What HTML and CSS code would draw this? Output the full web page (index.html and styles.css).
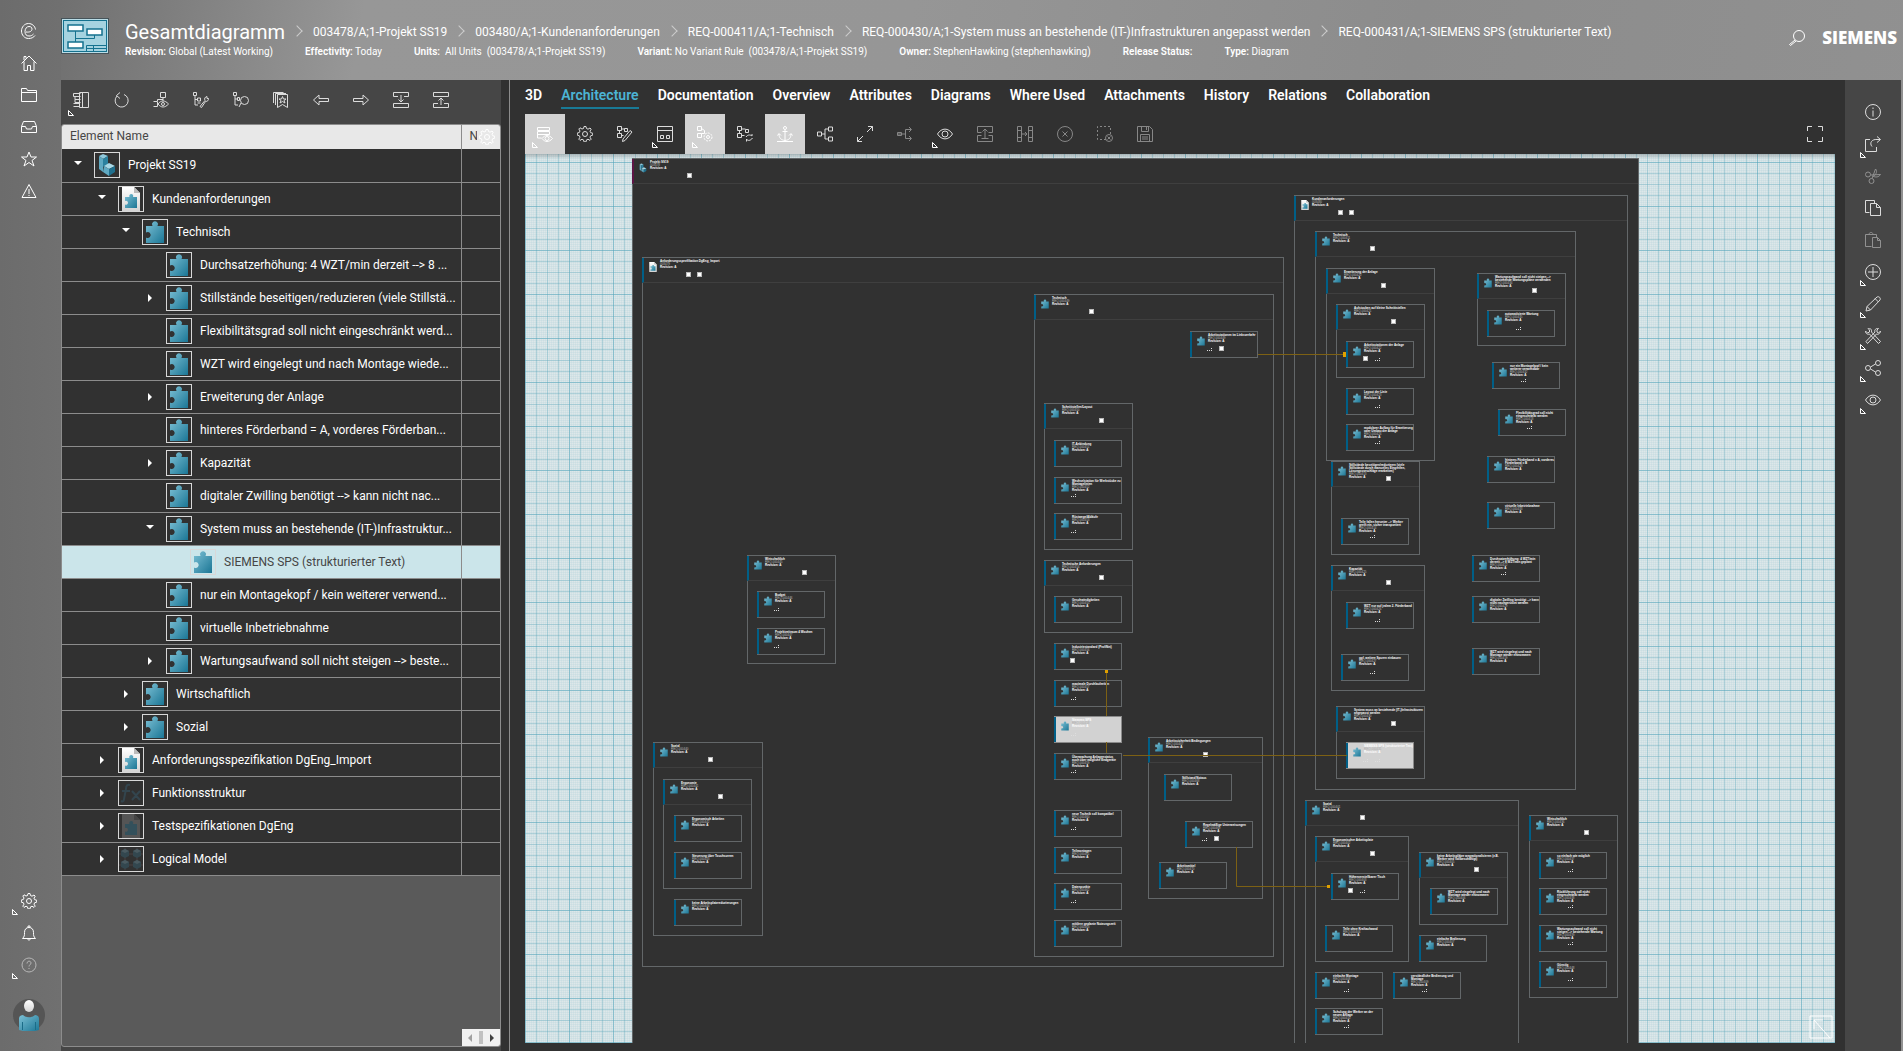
FILE: index.html
```html
<!DOCTYPE html>
<html lang="en">
<head>
  <meta charset="UTF-8">
  <title>Gesamtdiagramm</title>
  <link rel="stylesheet" href="styles.css">
</head>
<body>

  <svg class="sprite" aria-hidden="true">
    <defs>
      <linearGradient id="teal" x1="0" y1="0" x2="1" y2="1">
        <stop offset="0" stop-color="#7cc0d5"/>
        <stop offset="1" stop-color="#1b7695"/>
      </linearGradient>
      <linearGradient id="paper" x1="0" y1="0" x2="0" y2="1">
        <stop offset="0" stop-color="#ffffff"/>
        <stop offset="1" stop-color="#d4d4d4"/>
      </linearGradient>
    </defs>

    <!-- object icons -->
    <symbol id="o-puzzle" viewBox="0 0 24 24"><path fill="url(#teal)" d="M3 6h6.500a3 3 0 1 1 5 0H21v17H3v-5.500a3 3 0 1 0 0-5z"/></symbol>
    <symbol id="o-doc" viewBox="0 0 24 24"><path fill="url(#paper)" d="M3 0h12l6 6v18H3z"/><path fill="#bbb" d="M15 0v6h6z"/><path fill="url(#teal)" d="M6 10h4.500a2 2 0 1 1 3.500 0H18v11H6v-3.500a2 2 0 1 0 0-3.500z"/></symbol>
    <symbol id="o-part" viewBox="0 0 24 24"><path fill="#8fc9dc" d="M4 3l4-2 5 2-5 3z"/><path fill="#5fa9c2" d="M4 3l4 3v13l-4-3z"/><path fill="#2b819f" d="M8 6l5-3v8l-5 3z"/><path fill="#a8d8e6" d="M9 13l5-3 6 3-6 3z"/><path fill="#5fa9c2" d="M9 13l5 3v7l-6-4z"/><path fill="#1f6f8d" d="M14 16l6-3v6l-6 4z"/></symbol>
    <symbol id="o-fx" viewBox="0 0 24 24"><g fill="none" stroke="#33454e" stroke-width="2"><path d="M11 4c-3-1-4 1-4 4L5 18c0 2-1 3-3 2M3 10h8M13 10l8 9M21 10l-8 9"/></g></symbol>
    <symbol id="o-docdim" viewBox="0 0 24 24"><path fill="#555" d="M3 0h12l6 6v18H3z"/><path fill="#444" d="M15 0v6h6z"/><path fill="#33505b" d="M6 10h4.500a2 2 0 1 1 3.500 0H18v11H6v-3.500a2 2 0 1 0 0-3.500z"/></symbol>
    <symbol id="o-logical" viewBox="0 0 24 24"><path stroke="#4a4244" fill="none" d="M0 7h24M0 18h24M6 1v22M18 1v22"/><g fill="#33474f"><path d="M6 2l4 2v5l-4 2-4-2V4zM18 2l4 2v5l-4 2-4-2V4zM6 13l4 2v5l-4 2-4-2v-5zM18 13l4 2v5l-4 2-4-2v-5z"/></g><g fill="#4a5a60"><path d="M6 2l4 2-4 2-4-2zM18 2l4 2-4 2-4-2zM6 13l4 2-4 2-4-2zM18 13l4 2-4 2-4-2z"/></g></symbol>

    <!-- command icons -->
    <symbol id="i-tri" viewBox="0 0 6 6"><path d="M.5.5v5h5z"/></symbol>
    <symbol id="i-back" viewBox="0 0 16 16"><path d="M5 9c4 .5 6-1 6-3 0-1.500-1-2.500-3-2.500C5.500 3.500 4 6 4 8.500c0 3 1.500 4.500 4 4.500 2 0 3-.5 4.500-2M14.500 6.500C14 3 11 .5 7.500.5 3.500.5.5 4 .5 8s3 7.500 7 7.500c3 0 5-1 6.500-3"/></symbol>
    <symbol id="i-home" viewBox="0 0 16 16"><path d="M.5 8.500L8 1l7.500 7.500M3 6.500v9h3.500v-5h3v5H13v-9M3 5V1.500h2v2"/></symbol>
    <symbol id="i-folder" viewBox="0 0 16 16"><path d="M.5 14.500v-13h5l1 2h9v11zM.5 5.500h15"/></symbol>
    <symbol id="i-inbox" viewBox="0 0 16 16"><path d="M.5 7.500l2-5h11l2 5v6H.5zM.5 7.500h4l1 2.500h5l1-2.500h4"/></symbol>
    <symbol id="i-star" viewBox="0 0 16 16"><path d="M8 1l2 5h5.500L11 9.500l2 5.500-5-3.500L3 15l2-5.500L.5 6H6z"/></symbol>
    <symbol id="i-warn" viewBox="0 0 16 16"><path d="M8 1.500l7 13H1zM8 6v5M8 12v1"/></symbol>
    <symbol id="i-gear" viewBox="0 0 16 16"><path d="M6.500 2.500L7 .5h2l.5 2 1.500.7 2-1.200 1.200 1.200-1.200 2 .7 1.500 2 .5v2l-2 .5-.7 1.500 1.200 2-1.200 1.200-2-1.200-1.500.7-.5 2H7l-.5-2-1.500-.7-2 1.200-1.200-1.200 1.200-2-.7-1.500-2-.5V7l2-.5.700-1.500-1.200-2L3 1.800 5 3z"/><circle cx="8" cy="8" r="2.500"/></symbol>
    <symbol id="i-bell" viewBox="0 0 16 16"><path d="M1.500 13.500c2-2 2-3 2-6C3.500 4 5.500 2.500 8 2.500s4.500 1.500 4.500 5c0 3 0 4 2 6zM7 2.500V1h2v1.500M6.500 13.500c0 2 3 2 3 0"/></symbol>
    <symbol id="i-help" viewBox="0 0 16 16"><circle cx="8" cy="8" r="7"/><path d="M6 6.500c0-3 4-3 4-.5C10 7.500 8 8 8 9.500M8 11v1"/></symbol>
    <symbol id="i-panel" viewBox="0 0 16 16"><path d="M6.500.5h9v15h-9zM.5 1.500h7M.5 1.500v3h7M2 4.500v3h5.500M2 7.500v3h5.500M.5 11.500h6M.5 14.500h6M9.500 1v14"/></symbol>
    <symbol id="i-refresh" viewBox="0 0 16 16"><path d="M4 4a6.500 6.500 0 1 0 7-1.500M7 .5L3.500 3.500 7 6.500"/></symbol>
    <symbol id="i-boxeye" viewBox="0 0 16 16"><path d="M7.500.5h5v5h-5zM10 6v3M.5 9.500h4v5h-4M4.500 9V7.500H10M5 12c3-4 7-4 10.500 0-3.500 4-7.500 4-10.500 0z"/><circle cx="10" cy="12" r="1.500"/></symbol>
    <symbol id="i-treewrench" viewBox="0 0 16 16"><path d="M.5.5h3v3h-3zM2 4v9h3M2 7.500h3M4.500 6h3v3h-3zM4.500 11h3M7 14.500l5-6c-1-2 0-3.500 2-4v2h1.500c0 2-1 3-3 3l-4 6z"/></symbol>
    <symbol id="i-treefind" viewBox="0 0 16 16"><path d="M.5.5h3v3h-3zM2 4v9h3M2 7h3M4.500 5.500h2v3h-2zM8 11l-2 4"/><circle cx="11.500" cy="8.500" r="4"/></symbol>
    <symbol id="i-bookmarks" viewBox="0 0 16 16"><path d="M4.500 15.500v-13h10v13l-5-3zM2.500 13V1.500H13M.5 11V.5h10M9.500 4.500l1 2.500H13l-2 1.500 1 2.500-2.500-1.500L7 11l1-2.500L6 7h2.500z"/></symbol>
    <symbol id="i-left" viewBox="0 0 16 16"><path d="M.5 8L6 3v3.500h9.500v3H6V13z"/></symbol>
    <symbol id="i-right" viewBox="0 0 16 16"><path d="M15.500 8L10 3v3.500H.5v3H10V13z"/></symbol>
    <symbol id="i-expand" viewBox="0 0 16 16"><path d="M5 4.500H.5v-4h15v4H11M.5 11.500h15v4H.5zM8 3v7M5.500 7.500L8 10l2.500-2.500"/></symbol>
    <symbol id="i-collapse" viewBox="0 0 16 16"><path d="M5 11.500H.5v4h15v-4H11M.5.5h15v4H.5zM8 13V6M5.500 8.500L8 6l2.500 2.500"/></symbol>
    <symbol id="i-listeye" viewBox="0 0 16 16"><path d="M.5 1.500h12v3H.5zM.5 5.500h12v3H.5zM.5 8v4h4M5 12.500c3-4 7-4 10.500 0-3.500 4-7.500 4-10.500 0z"/><circle cx="10" cy="12.500" r="2"/></symbol>
    <symbol id="i-blockpen" viewBox="0 0 16 16"><path d="M.5.5h4v4h-4zM.5 7.500h4v4h-4zM7.500 2.500h3v3h-3zM4.500 3h3M2.500 4.500v3M4.500 9.500h2M6 13l7-8.500 2 1.500-7 8.500-2.500 1z"/></symbol>
    <symbol id="i-layout" viewBox="0 0 16 16"><path d="M.5.5h15v15H.5zM.5 4.500h15M3.500 9.500h3v3h-3zM9.500 9.500h3v3h-3z"/></symbol>
    <symbol id="i-blockgear" viewBox="0 0 16 16"><path d="M.5.5h4v4h-4zM.5 7.500h4v4h-4zM4.500 2.500l3 2v3H4.500"/><circle cx="11" cy="11" r="1.500"/><circle cx="11" cy="11" r="4" stroke-dasharray="2 1"/></symbol>
    <symbol id="i-blocksync" viewBox="0 0 16 16"><path d="M.5.5h4v4h-4zM.5 7.500h4v4h-4zM8.500 3.500h3v3h-3zM4.500 3h4M2.500 4.500v3M4.500 9.500h3M9 11c2-3 5-2 6-1V8M15.500 12c-2 3-5 3-6 1v2.500"/></symbol>
    <symbol id="i-anchor" viewBox="0 0 16 16"><circle cx="8" cy="2" r="1.500"/><path d="M8 3.500v11M5.500 5.500h5M2 8c0 4 2 6 6 6.500 4-.5 6-2.500 6-6.500M.5 9.500L2 7.500l2 2M12 9.500l2-2 1.500 2M0 15.500h16"/></symbol>
    <symbol id="i-branch" viewBox="0 0 16 16"><path d="M.5 6h4v4h-4zM11.500 1h4v4h-4zM11.500 11h4v4h-4zM4.500 8H8M11.500 3H8v10h3.500"/></symbol>
    <symbol id="i-scale" viewBox="0 0 16 16"><path d="M10 6l5.500-5.500M11 .5h4.500V5M6 10L.5 15.500M.5 11v4.500H5"/></symbol>
    <symbol id="i-route" viewBox="0 0 16 16"><path d="M.5 6.500h4v3h-4zM1 8h8M14 3.500H8.500v9H14M12 1l2.500 2.500L12 6M12 10l2.500 2.500L12 15"/></symbol>
    <symbol id="i-eye" viewBox="0 0 16 16"><path d="M.5 8C4.500 1.500 11.500 1.500 15.500 8 11.500 14.500 4.500 14.500.5 8z"/><circle cx="8" cy="8" r="3"/></symbol>
    <symbol id="i-hgap" viewBox="0 0 16 16"><path d="M4.500 6.500h-4v-6h15v6h-4M4.500 9.500h-4v6h15v-6h-4M4.500 12.500h7M8 12V3M5.500 5.500L8 3l2.500 2.500"/></symbol>
    <symbol id="i-vgap" viewBox="0 0 16 16"><path d="M.5.5h4v15h-4zM11.500.5h4v15h-4zM.5 4.500h4M.5 11.500h4M11.500 4.500h4M11.500 11.500h4M5 8h5M8 6l2 2-2 2"/></symbol>
    <symbol id="i-cancel" viewBox="0 0 16 16"><circle cx="8" cy="8" r="7.500"/><path d="M5.500 5.500l5 5M10.500 5.500l-5 5"/></symbol>
    <symbol id="i-deselect" viewBox="0 0 16 16"><path stroke-dasharray="2 2" d="M9 13.500H.5V.5h13V9"/><circle cx="12" cy="12" r="3.500"/><path d="M10.500 10.500l3 3M13.500 10.500l-3 3"/></symbol>
    <symbol id="i-save" viewBox="0 0 16 16"><path d="M.5.5h12l3 3v12H.5zM4.500.5v5h7v-5M9.500 1v3M3.500 15V8.500h9V15M5 11h6M5 13h6"/></symbol>
    <symbol id="i-full" viewBox="0 0 16 16"><path d="M.5 5V.5H5M11 .5h4.500V5M15.500 11v4.500H11M5 15.500H.5V11"/></symbol>
    <symbol id="i-info" viewBox="0 0 16 16"><circle cx="8" cy="8" r="7.500"/><path d="M8 6.500v6M8 3.500v1.500"/></symbol>
    <symbol id="i-open" viewBox="0 0 16 16"><path d="M5 3.500H.5v12h11V11M7 10.500C4 7 7 3 12 3.500h3M12 .5l3.500 3-3.500 3"/></symbol>
    <symbol id="i-cut" viewBox="0 0 16 16"><circle cx="3" cy="6.500" r="2.500"/><circle cx="6.500" cy="13" r="2.500"/><path d="M5.500 7l10-.5c-2 3-5 3-8 1.500M7 10.500L10.500 1c2 2 1 5-2 7.500"/></symbol>
    <symbol id="i-copy" viewBox="0 0 16 16"><path d="M4.500 12.500h-4V.5h9v3M5.500 3.500h6l4 4v8h-10zM11.500 3.500v4h4"/></symbol>
    <symbol id="i-paste" viewBox="0 0 16 16"><path d="M6.500 14.500h-6v-12h11V5M3.500 2.500c0-1 1-1 2-2h1c1 1 2 1 2 2M7.500 5.500h5l3 3v7h-8zM12.500 5.500v3h3"/></symbol>
    <symbol id="i-add" viewBox="0 0 16 16"><circle cx="8" cy="8" r="7.500"/><path d="M8 3v10M3 8h10"/></symbol>
    <symbol id="i-pen" viewBox="0 0 16 16"><path d="M1 15l1-4.500L12 1c2-1 4 1 3 3L5.500 14zM10 2.500L13.500 6M2 10.500L5.500 14"/></symbol>
    <symbol id="i-tools" viewBox="0 0 16 16"><path d="M.5 3l2 2 2-1V2L3 .5c2-1 4 1 3.500 3.500l9 9.500-2 2L4.500 6C2.500 7 0 5 .5 3zM15.500 3l-2 2-1.500-1V2L13.500.5C11 0 9 2 10 4l-9 9.500 1.500 2 9-9.500c2 1 4-1 4-3z"/></symbol>
    <symbol id="i-share" viewBox="0 0 16 16"><circle cx="3" cy="8" r="2.500"/><circle cx="13" cy="3" r="2.500"/><circle cx="13" cy="13" r="2.500"/><path d="M5.500 7l5-3M5.500 9l5 3"/></symbol>
    <symbol id="i-search" viewBox="0 0 16 16"><circle cx="10" cy="6" r="5.500"/><path d="M6 10l-5.500 4.500 1 1L7 11"/></symbol>
  </svg>

  <nav class="rail">
    <div class="rail-group">
      <button aria-label="Back"><svg class="icon"><use href="#i-back"/></svg></button>
      <button aria-label="Home"><svg class="icon"><use href="#i-home"/></svg></button>
      <button aria-label="Folders"><svg class="icon"><use href="#i-folder"/></svg></button>
      <button aria-label="Inbox"><svg class="icon"><use href="#i-inbox"/></svg></button>
      <button aria-label="Favorites"><svg class="icon"><use href="#i-star"/></svg></button>
      <button aria-label="Alerts"><svg class="icon"><use href="#i-warn"/></svg></button>
    </div>
    <div class="rail-group">
      <button aria-label="Settings"><svg class="icon"><use href="#i-gear"/></svg><svg class="tri"><use href="#i-tri"/></svg></button>
      <button aria-label="Notifications"><svg class="icon"><use href="#i-bell"/></svg></button>
      <button aria-label="Help"><svg class="icon dim"><use href="#i-help"/></svg><svg class="tri"><use href="#i-tri"/></svg></button>
      <button class="avatar" aria-label="Profile">
        <svg viewBox="0 0 32 32">
          <circle cx="16" cy="16" r="16" fill="#555"/>
          <ellipse cx="16" cy="7" rx="5" ry="6" fill="url(#paper)"/>
          <path fill="url(#teal)" d="M6 31V20c0-3 2-4 4-4 3 3 9 3 12 0 2 0 4 1 4 4v11c-6 2-14 2-20 0z"/>
          <path stroke="#1b6c88" d="M9.500 23v8M22.500 23v8"/>
        </svg>
      </button>
    </div>
  </nav>

  <div class="page">
    <header class="header">
      <svg class="doc-icon" viewBox="0 0 48 36">
        <rect x=".5" y=".5" width="47" height="35" fill="#b9dce6" stroke="#46545a"/>
        <rect x="2.500" y="2.500" width="43" height="31" fill="#a5d3e0" stroke="#15728f"/>
        <g fill="#fff" stroke="#15728f" stroke-width="1.500"><path d="M7 7h15v6H7zM26 11h15v6H26zM7 24h15v6H7z"/></g>
        <path fill="none" stroke="#15728f" d="M14.500 13v11M14.500 20.500h19V17M25.500 33V27.500h20M25.500 30.500h20M32.500 27.500V33"/>
      </svg>
      <div class="titles">
        <div class="crumbs">
          <h1>Gesamtdiagramm</h1>
          <a href="#">003478/A;1-Projekt SS19</a>
          <a href="#">003480/A;1-Kundenanforderungen</a>
          <a href="#">REQ-000411/A;1-Technisch</a>
          <a href="#">REQ-000430/A;1-System muss an bestehende (IT-)Infrastrukturen angepasst werden</a>
          <a href="#">REQ-000431/A;1-SIEMENS SPS (strukturierter Text)</a>
        </div>
        <div class="meta">
          <span><b>Revision:</b> Global (Latest Working)</span>
          <span><b>Effectivity:</b> Today</span>
          <span><b>Units:</b>&nbsp; All Units &nbsp;(003478/A;1-Projekt SS19)</span>
          <span><b>Variant:</b> No Variant Rule &nbsp;(003478/A;1-Projekt SS19)</span>
          <span><b>Owner:</b> StephenHawking (stephenhawking)</span>
          <span><b>Release Status:</b></span>
          <span><b>Type:</b> Diagram</span>
        </div>
      </div>
      <button class="search" aria-label="Search"><svg class="icon"><use href="#i-search"/></svg></button>
      <div class="brand">SIEMENS</div>
    </header>

    <div class="work">
      <section class="tree-panel">
        <div class="tree-tools">
          <button aria-label="Panel"><svg class="icon"><use href="#i-panel"/></svg><svg class="tri"><use href="#i-tri"/></svg></button>
          <button aria-label="Reset"><svg class="icon"><use href="#i-refresh"/></svg></button>
          <button aria-label="Show"><svg class="icon"><use href="#i-boxeye"/></svg></button>
          <button aria-label="Configure"><svg class="icon"><use href="#i-treewrench"/></svg></button>
          <button aria-label="Find"><svg class="icon"><use href="#i-treefind"/></svg></button>
          <button aria-label="Bookmarks"><svg class="icon"><use href="#i-bookmarks"/></svg></button>
          <button aria-label="Previous"><svg class="icon"><use href="#i-left"/></svg></button>
          <button aria-label="Next"><svg class="icon"><use href="#i-right"/></svg></button>
          <button aria-label="Expand"><svg class="icon"><use href="#i-expand"/></svg></button>
          <button aria-label="Collapse"><svg class="icon"><use href="#i-collapse"/></svg></button>
        </div>
        <div class="tree-box">
          <table class="tree">
            <thead>
              <tr><th>Element Name</th><th class="narrow">N<svg class="icon"><use href="#i-gear"/></svg></th></tr>
            </thead>
            <tbody id="treeRows"></tbody>
          </table>
          <div class="hscroll"><i class="arrow-left"></i><i class="thumb"></i><i class="arrow-right"></i></div>
        </div>
      </section>

      <main class="main">
        <div class="tabs">
          <a href="#">3D</a>
          <a href="#" class="active">Architecture</a>
          <a href="#">Documentation</a>
          <a href="#">Overview</a>
          <a href="#">Attributes</a>
          <a href="#">Diagrams</a>
          <a href="#">Where Used</a>
          <a href="#">Attachments</a>
          <a href="#">History</a>
          <a href="#">Relations</a>
          <a href="#">Collaboration</a>
        </div>
        <div class="tools">
          <button class="on" aria-label="View"><svg class="icon"><use href="#i-listeye"/></svg><svg class="tri"><use href="#i-tri"/></svg></button>
          <button aria-label="Settings"><svg class="icon"><use href="#i-gear"/></svg></button>
          <button aria-label="Edit"><svg class="icon"><use href="#i-blockpen"/></svg></button>
          <button aria-label="Layout"><svg class="icon"><use href="#i-layout"/></svg><svg class="tri"><use href="#i-tri"/></svg></button>
          <button class="on" aria-label="Options"><svg class="icon"><use href="#i-blockgear"/></svg><svg class="tri"><use href="#i-tri"/></svg></button>
          <button aria-label="Update"><svg class="icon"><use href="#i-blocksync"/></svg></button>
          <button class="on" aria-label="Anchor"><svg class="icon"><use href="#i-anchor"/></svg></button>
          <button aria-label="Branch"><svg class="icon"><use href="#i-branch"/></svg></button>
          <button aria-label="Fit"><svg class="icon"><use href="#i-scale"/></svg></button>
          <button aria-label="Route"><svg class="icon dim"><use href="#i-route"/></svg></button>
          <button aria-label="Visibility"><svg class="icon"><use href="#i-eye"/></svg><svg class="tri"><use href="#i-tri"/></svg></button>
          <button aria-label="Align vertical"><svg class="icon dim"><use href="#i-hgap"/></svg></button>
          <button aria-label="Align horizontal"><svg class="icon dim"><use href="#i-vgap"/></svg></button>
          <button aria-label="Cancel"><svg class="icon dim"><use href="#i-cancel"/></svg></button>
          <button aria-label="Deselect"><svg class="icon dim"><use href="#i-deselect"/></svg></button>
          <button aria-label="Save"><svg class="icon dim"><use href="#i-save"/></svg></button>
          <button class="full" aria-label="Full screen"><svg class="icon"><use href="#i-full"/></svg></button>
        </div>
        <div class="canvas" id="canvas">
          <svg class="overview" viewBox="0 0 26 26"><path d="M3 1h22v22M3 1v22h22M7 5v9M7 5h9M7 5l16 18"/></svg>
        </div>
      </main>

      <aside class="side">
        <button aria-label="Info"><svg class="icon"><use href="#i-info"/></svg></button>
        <button aria-label="Open"><svg class="icon"><use href="#i-open"/></svg><svg class="tri"><use href="#i-tri"/></svg></button>
        <button aria-label="Cut"><svg class="icon dim"><use href="#i-cut"/></svg></button>
        <button aria-label="Copy"><svg class="icon"><use href="#i-copy"/></svg></button>
        <button aria-label="Paste"><svg class="icon dim"><use href="#i-paste"/></svg></button>
        <button aria-label="New"><svg class="icon"><use href="#i-add"/></svg><svg class="tri"><use href="#i-tri"/></svg></button>
        <button aria-label="Edit"><svg class="icon"><use href="#i-pen"/></svg><svg class="tri"><use href="#i-tri"/></svg></button>
        <button aria-label="Manage"><svg class="icon"><use href="#i-tools"/></svg><svg class="tri"><use href="#i-tri"/></svg></button>
        <button aria-label="Share"><svg class="icon"><use href="#i-share"/></svg><svg class="tri"><use href="#i-tri"/></svg></button>
        <button aria-label="View"><svg class="icon"><use href="#i-eye"/></svg><svg class="tri"><use href="#i-tri"/></svg></button>
      </aside>
    </div>
  </div>

  <script src="app.js"></script>
</body>
</html>
```

FILE: styles.css
```css
* {
  box-sizing: border-box;
}
body {
  margin: 0;
  height: 100vh;
  display: flex;
  overflow: hidden;
  font-family: "Segoe UI", Roboto, "Open Sans", sans-serif;
  font-size: 12px;
  color: #fff;
  background: linear-gradient(100deg, #6c6c6c 0, #707070 60px, #979797 360px, #969696 900px, #8c8c8c 1400px, #929292 100%);
}
button {
  position: relative;
  display: flex;
  align-items: center;
  justify-content: center;
  padding: 0;
  border: none;
  background: none;
  color: inherit;
  cursor: pointer;
}
a {
  color: inherit;
  text-decoration: none;
}
.sprite {
  position: absolute;
  width: 0;
  height: 0;
}
.icon {
  width: 16px;
  height: 16px;
  fill: none;
  stroke: currentColor;
}
.work .icon {
  color: #dcdcdc;
}
.dim {
  opacity: 0.5;
}
.tri {
  position: absolute;
  left: 7px;
  bottom: 6px;
  width: 6px;
  height: 6px;
  fill: none;
  stroke: #fff;
}

/* left rail */
.rail {
  width: 61px;
  flex: none;
  display: flex;
  flex-direction: column;
  justify-content: space-between;
  padding: 15px 0 20px;
  background: linear-gradient(90deg, #6c6c6c, #707070);
}
.rail button {
  width: 58px;
  height: 32px;
}
.rail .tri {
  left: 12px;
  bottom: 2px;
}
.rail .avatar {
  height: 32px;
  margin-top: 18px;
}
.avatar svg {
  width: 32px;
  height: 32px;
}

.page {
  flex: 1;
  min-width: 0;
  display: flex;
  flex-direction: column;
}

/* header */
.header {
  height: 80px;
  flex: none;
  display: flex;
  padding: 18px 4px 0 0;
}
.doc-icon {
  width: 48px;
  height: 36px;
  flex: none;
}
.titles {
  flex: 1;
  margin-left: 16px;
  white-space: nowrap;
}
.crumbs {
  display: flex;
  align-items: center;
  height: 27px;
  font-size: 12px;
}
h1 {
  margin: 0;
  font-size: 20px;
  line-height: 26px;
  font-weight: normal;
}
.crumbs a::before {
  content: "";
  display: inline-block;
  width: 7px;
  height: 7px;
  margin: 0 12px 1px 8px;
  border: solid #ccc;
  border-width: 1px 1px 0 0;
  transform: rotate(45deg);
}
.meta {
  display: flex;
  gap: 32px;
  font-size: 10px;
  line-height: 14px;
}
.meta b {
  font-weight: 600;
}
.search {
  align-self: flex-start;
  margin: 12px 17px 0 0;
}
.brand {
  padding-right: 2px;
  font-family: "Open Sans", sans-serif;
  font-size: 17px;
  line-height: 40px;
  font-weight: 800;
}

.work {
  flex: 1;
  min-height: 0;
  display: flex;
  padding-right: 2px;
}

/* element tree */
.tree-panel {
  width: 440px;
  flex: none;
  display: flex;
  flex-direction: column;
  padding-bottom: 4px;
  background: #464646;
}
.tree-tools {
  display: flex;
  height: 44px;
}
.tree-tools button {
  width: 40px;
  height: 40px;
}
.tree-tools .tri {
  bottom: 4px;
}
.tree-box {
  flex: 1;
  display: flex;
  flex-direction: column;
  justify-content: space-between;
  border: 1px solid #8c8c8c;
  border-radius: 3px;
  background: #5a5a5a;
  overflow: hidden;
}
.tree {
  width: 100%;
  table-layout: fixed;
  border-collapse: collapse;
}
.tree th {
  height: 24px;
  padding: 0 8px 2px;
  background: #e8e8e8;
  color: #464646;
  font-weight: normal;
  text-align: left;
}
.tree .narrow {
  position: relative;
  width: 39px;
  border-left: 1px solid #8c8c8c;
}
.tree .narrow .icon {
  position: absolute;
  right: 3px;
  top: 2px;
  width: 20px;
  height: 20px;
  padding: 2px;
  background: #e8e8e8;
  color: #fff;
}
.tree td {
  height: 33px;
  padding: 0;
  background: #313131;
  border-bottom: 1px solid #8c8c8c;
}
.tree td + td {
  border-left: 1px solid #8c8c8c;
}
.tree .selected td {
  background: #cbe5ea;
  color: #464646;
}
.item {
  display: flex;
  align-items: center;
  white-space: nowrap;
}
.level-1 { padding-left: 24px; }
.level-2 { padding-left: 48px; }
.level-3 { padding-left: 72px; }
.level-4 { padding-left: 96px; }
.caret {
  width: 32px;
  flex: none;
  padding-left: 12px;
}
.caret::before {
  content: "";
  display: block;
  width: 0;
}
.caret.open::before {
  border: 4px solid transparent;
  border-top-color: #fff;
}
.caret.closed::before {
  margin-left: 2px;
  border: 4px solid transparent;
  border-left-color: #fff;
}
.obj {
  width: 26px;
  height: 26px;
  flex: none;
  margin-right: 8px;
  border: 1px solid #d8d8d8;
}
.hscroll {
  align-self: flex-end;
  display: flex;
  align-items: center;
  justify-content: space-between;
  width: 38px;
  height: 17px;
  padding: 0 6px;
  background: #f1f1f1;
}
.arrow-left {
  border: 4px solid transparent;
  border-left: none;
  border-right-color: #a0a0a0;
}
.arrow-right {
  border: 4px solid transparent;
  border-right: none;
  border-left-color: #404040;
}
.thumb {
  width: 4px;
  height: 13px;
  background: #c1c1c1;
}

/* work area */
.main {
  flex: 1;
  min-width: 0;
  display: flex;
  flex-direction: column;
  margin-left: 8px;
  padding: 0 10px 8px 15px;
  border-left: 1px solid #8c8c8c;
  background: #313131;
  box-shadow: -8px 0 0 #313131;
}
.tabs {
  display: flex;
  gap: 19px;
  height: 34px;
  font-size: 14px;
  font-weight: 600;
  white-space: nowrap;
}
.tabs a {
  height: 29px;
  line-height: 30px;
}
.tabs .active {
  color: #4cb4d4;
  border-bottom: 2px solid #197a96;
}
.tools {
  display: flex;
}
.tools button {
  width: 40px;
  height: 40px;
}
.tools .on {
  background: #d2d2d2;
}
.tools .on .icon {
  color: #fff;
}
.tools .full {
  margin-left: auto;
}
.side {
  width: 56px;
  flex: none;
  padding-top: 16px;
  background: #464646;
}
.side button {
  width: 56px;
  height: 32px;
}
.side .tri {
  left: 15px;
  bottom: 2px;
}

/* diagram */
.canvas {
  position: relative;
  flex: 1;
  overflow: hidden;
  background-color: #dde7e9;
  background-image:
    linear-gradient(rgba(0, 0, 0, 0.2), transparent 5px),
    repeating-linear-gradient(90deg, rgba(70, 160, 185, 0.3) 0 1px, transparent 1px 44px),
    repeating-linear-gradient(0deg, rgba(70, 160, 185, 0.3) 0 1px, transparent 1px 44px),
    repeating-linear-gradient(90deg, rgba(90, 165, 185, 0.35) 0 1px, transparent 1px 11px),
    repeating-linear-gradient(0deg, rgba(90, 165, 185, 0.35) 0 1px, transparent 1px 11px),
    repeating-linear-gradient(90deg, rgba(120, 180, 195, 0.1) 0 1px, transparent 1px 2px),
    repeating-linear-gradient(0deg, rgba(120, 180, 195, 0.1) 0 1px, transparent 1px 2px);
}
.node {
  position: absolute;
  border: 1px solid #636769;
  background: #313131;
  font-family: "Liberation Sans Narrow", "Liberation Sans", sans-serif;
  font-size: 3px;
  line-height: 3px;
}
.node-head {
  position: relative;
  display: flex;
  gap: 2px;
  height: 25px;
  padding: 2px 0 0 4px;
  border-left: 2px solid #005f87;
  margin-left: -1px;
}
.box > .node-head {
  border-bottom: 1px solid #3f3f3f;
}
.sheet > .node-head {
  border-left-color: #5e1545;
}
.node-head svg {
  width: 10px;
  height: 10px;
  flex: none;
  margin-top: 2px;
}
.node-text b {
  display: block;
}
.node-text span {
  display: block;
  color: #bbb;
}
.mark {
  position: absolute;
  top: 14px;
  width: 5px;
  height: 5px;
  border: 1px solid #bbb;
  background: #fff;
}
.pins {
  position: absolute;
  top: 16px;
  width: 5px;
  height: 3px;
  border: dotted #ddd;
  border-width: 0 1px 1px 0;
}
.node.picked {
  background: #d2d2d2;
  border-color: #8a8a8a;
}
.picked .node-text span {
  color: #aaa;
}
.links {
  position: absolute;
  left: 0;
  top: 0;
  width: 100%;
  height: 100%;
  fill: none;
  stroke: #7d6114;
}
.links .head {
  fill: #e0a000;
  stroke: none;
}
.overview {
  position: absolute;
  right: 2px;
  bottom: 2px;
  width: 26px;
  height: 26px;
  fill: none;
  stroke: #fff;
}
```

FILE: app.js
```js
const rows = [
  [0, 'open', 'part', 'Projekt SS19'],
  [1, 'open', 'doc', 'Kundenanforderungen'],
  [2, 'open', 'puzzle', 'Technisch'],
  [3, '', 'puzzle', 'Durchsatzerhöhung: 4 WZT/min derzeit --> 8 ...'],
  [3, 'closed', 'puzzle', 'Stillstände beseitigen/reduzieren (viele Stillstä...'],
  [3, '', 'puzzle', 'Flexibilitätsgrad soll nicht eingeschränkt werd...'],
  [3, '', 'puzzle', 'WZT wird eingelegt und nach Montage wiede...'],
  [3, 'closed', 'puzzle', 'Erweiterung der Anlage'],
  [3, '', 'puzzle', 'hinteres Förderband = A, vorderes Förderban...'],
  [3, 'closed', 'puzzle', 'Kapazität'],
  [3, '', 'puzzle', 'digitaler Zwilling benötigt --> kann nicht nac...'],
  [3, 'open', 'puzzle', 'System muss an bestehende (IT-)Infrastruktur...'],
  [4, '', 'puzzle', 'SIEMENS SPS (strukturierter Text)', true],
  [3, '', 'puzzle', 'nur ein Montagekopf / kein weiterer verwend...'],
  [3, '', 'puzzle', 'virtuelle Inbetriebnahme'],
  [3, 'closed', 'puzzle', 'Wartungsaufwand soll nicht steigen --> beste...'],
  [2, 'closed', 'puzzle', 'Wirtschaftlich'],
  [2, 'closed', 'puzzle', 'Sozial'],
  [1, 'closed', 'doc', 'Anforderungsspezifikation DgEng_Import'],
  [1, 'closed', 'fx', 'Funktionsstruktur'],
  [1, 'closed', 'docdim', 'Testspezifikationen DgEng'],
  [1, 'closed', 'logical', 'Logical Model']
];

document.getElementById('treeRows').innerHTML = rows.map(([level, state, icon, name, selected]) => `
  <tr class="${selected ? 'selected' : ''}">
    <td><div class="item level-${level}">
      <span class="caret ${state}"></span>
      <svg class="obj"><use href="#o-${icon}"/></svg>
      <span>${name.replace('>', '&gt;')}</span>
    </div></td>
    <td></td>
  </tr>`).join('');

// diagram coordinates are in window space, the canvas starts here
const pan = { x: 525, y: 154 };

// x, y, right, bottom, title, id, marks, icon
const boxes = [
  [632, 158, 1639, 1060, 'Projekt SS19', '003478', [57], 'part'],
  [642, 257, 1284, 967, 'Anforderungsspezifikation DgEng_Import', '003479', [46, 57], 'doc'],
  [1034, 294, 1274, 957, 'Technisch', 'REQ-000449', [57]],
  [1044, 403, 1133, 550, 'Schnittstellen/Layout', 'REQ-000450', [57]],
  [1044, 560, 1133, 633, 'Technische Anforderungen', 'REQ-000454', [57]],
  [1148, 737, 1263, 899, 'Arbeitssicherheit Bedingungen', 'REQ-000467', [57]],
  [747, 555, 836, 664, 'Wirtschaftlich', 'REQ-000445', [57]],
  [653, 742, 763, 936, 'Sozial', 'REQ-000440', [57]],
  [663, 779, 752, 889, 'Ergonomie', 'REQ-000441', [57]],
  [1294, 195, 1628, 1060, 'Kundenanforderungen', '003480', [46, 57], 'doc'],
  [1315, 231, 1576, 790, 'Technisch', 'REQ-000411', [57]],
  [1326, 268, 1435, 461, 'Erweiterung der Anlage', 'REQ-000420', [57]],
  [1336, 304, 1425, 378, 'Aufstocken auf kleine Schnittstellen', 'REQ-000421', [57]],
  [1331, 461, 1420, 555, 'Stillstände beseitigen/reduzieren (viele Stillstände durch manuelles Eingreifen, Lösungsvorschläge erarbeiten)', 'REQ-000413', [57]],
  [1331, 565, 1425, 691, 'Kapazität', 'REQ-000425', [57]],
  [1336, 706, 1425, 779, 'System muss an bestehende (IT-)Infrastrukturen angepasst werden', 'REQ-000430', [57]],
  [1477, 273, 1566, 346, 'Wartungsaufwand soll nicht steigen --&gt; bestehende Wartungspläne verwenden', 'REQ-000434', [57]],
  [1305, 800, 1519, 1060, 'Sozial', 'REQ-000401', [57]],
  [1315, 836, 1409, 962, 'Ergonomischer Arbeitsplatz', 'REQ-000402', [57]],
  [1419, 852, 1508, 925, 'keine Arbeitsplätze wegrationalisieren (z.B. Werker wird Vollbeschäftigt)', 'REQ-000405', [57]],
  [1529, 815, 1618, 998, 'Wirtschaftlich', 'REQ-000436', [57]]
];

// x, y, title, id, marks, pins, picked
const leaves = [
  [1190, 331, 'Arbeitsstationen im Linksverkehr', 'REQ-000449', [31], [19]],
  [1054, 440, 'IT-Anbindung', 'REQ-000451', [], []],
  [1054, 477, 'Wechselstation für Werkstücke zu Montagelinien', 'REQ-000452', [], [19]],
  [1054, 513, 'Rüstwege/Abläufe', 'REQ-000453', [], [19]],
  [1054, 596, 'Geschwindigkeiten', 'REQ-000455', [], []],
  [1054, 643, 'Industriestandard (ProfiNet)', 'REQ-000456', [18], []],
  [1054, 680, 'maximale Durchlaufzeiten', 'REQ-000457', [], [19]],
  [1054, 716, 'Siemens SPS', 'REQ-000458', [], [19], true],
  [1054, 753, 'Überwachung Anlagenstatus auch über mögliche Endgeräte', 'REQ-000459', [], [19]],
  [1054, 810, 'neue Technik soll kompatibel', 'REQ-000460', [], [19]],
  [1054, 847, 'Teilmontagen', 'REQ-000461', [], []],
  [1054, 883, 'Datenpunkte', 'REQ-000462', [], [19]],
  [1054, 920, 'mittlere geplante Nutzungszeit', 'REQ-000463', [], []],
  [1164, 774, 'Stillstand Notaus', 'REQ-000468', [], []],
  [1185, 821, 'Regelmäßige Unterweisungen', 'REQ-000469', [31], [19]],
  [1159, 862, 'Arbeitsmittel', 'REQ-000470', [], []],
  [757, 591, 'Budget', 'REQ-000446', [], [19]],
  [757, 628, 'Projektzeitraum 4 Wochen', 'REQ-000447', [], [19]],
  [674, 815, 'Ergonomisch Arbeiten', 'REQ-000442', [], []],
  [674, 852, 'Steuerung über Touchscreen', 'REQ-000443', [], []],
  [674, 899, 'keine Arbeitsplatzreduzierungen', 'REQ-000444', [], []],
  [1346, 341, 'Arbeitsstationen der Anlage', 'REQ-000422', [19], [31]],
  [1346, 388, 'Layout der Linie', 'REQ-000423', [], [31]],
  [1346, 424, 'modularer Aufbau für Erweiterung oder Umbau der Anlage', 'REQ-000424', [], [31]],
  [1341, 518, 'Teile fallen herunter --&gt; Werker greift ein, sicher transportiert', 'REQ-000414', [], [31]],
  [1346, 602, 'WZT nur auf jedem 2. Förderband', 'REQ-000426', [], [31]],
  [1341, 654, 'ggf. weitere Spuren einbauen', 'REQ-000427', [], [31]],
  [1346, 742, 'SIEMENS SPS (strukturierter Text)', 'REQ-000431', [], [19, 31], true],
  [1487, 310, 'automatisierte Wartung', 'REQ-000435', [], [31]],
  [1492, 362, 'nur ein Montagekopf / kein weiterer verwendbar', 'REQ-000432', [], [31]],
  [1498, 409, 'Flexibilitätsgrad soll nicht eingeschränkt werden', 'REQ-000418', [], [31]],
  [1487, 456, 'hinteres Förderband = A, vorderes Förderband = B', 'REQ-000428', [], []],
  [1487, 502, 'virtuelle Inbetriebnahme', 'REQ-000433', [], []],
  [1472, 555, 'Durchsatzerhöhung: 4 WZT/min derzeit --&gt; 8 WZT/min geplant', 'REQ-000412', [], [31]],
  [1472, 596, 'digitaler Zwilling benötigt --&gt; kann nicht nachgerüstet werden', 'REQ-000429', [], []],
  [1472, 648, 'WZT wird eingelegt und nach Montage wieder entnommen', 'REQ-000419', [], []],
  [1331, 873, 'Höhenverstellbarer Tisch', 'REQ-000403', [19], [31]],
  [1325, 925, 'Teile ohne Kraftaufwand', 'REQ-000404', [], []],
  [1430, 888, 'WZT wird eingelegt und nach Montage wieder entnommen', 'REQ-000406', [], []],
  [1419, 935, 'einfache Bedienung', 'REQ-000407', [], []],
  [1315, 972, 'einfache Montage', 'REQ-000408', [], [31]],
  [1393, 972, 'verständliche Bedienung und Montage', 'REQ-000409', [], [31]],
  [1315, 1008, 'Schulung der Werker an der neuen Anlage', 'REQ-000410', [], [31]],
  [1539, 852, 'so einfach wie möglich', 'REQ-000437', [], [31]],
  [1539, 888, 'Rückführung soll nicht eingeschränkt werden', 'REQ-000438', [], [31]],
  [1539, 925, 'Wartungsaufwand soll nicht steigen --&gt; bestehende Wartung', 'REQ-000439', [], [31]],
  [1539, 961, 'Günstig', 'REQ-000448', [], [31]]
];

function node(cls, x, y, w, h, title, id, marks, pins, icon) {
  return `
    <div class="node ${cls}" style="left:${x - pan.x}px;top:${y - pan.y}px;width:${w}px;height:${h}px">
      <div class="node-head">
        <svg><use href="#o-${icon}"/></svg>
        <div class="node-text"><b>${title}</b><span>${id}</span><b>Revision: A</b></div>
        ${marks.map(m => `<i class="mark" style="left:${m - 4}px"></i>`).join('')}
        ${pins.map(p => `<i class="pins" style="left:${p - 4}px"></i>`).join('')}
      </div>
    </div>`;
}

const links = `
  <svg class="links">
    <path d="M733 200.500H820M712 601.500H822M581.500 517V562M581.500 588V599M598 601.500H712M711.500 693V732.500H805"/>
    <path class="head" d="M818 198h3v5h-3zM580 516h3v3h-3zM802 731h3v3h-3z"/>
  </svg>`;

const boxHtml = boxes.map(([x, y, r, b, title, id, marks, icon], i) =>
  node(i === 0 ? 'box sheet' : 'box', x, y, r - x, b - y, title, id, marks, [], icon || 'puzzle'));

const leafHtml = leaves.map(([x, y, title, id, marks, pins, picked]) =>
  node(picked ? 'leaf picked' : 'leaf', x, y, 68, 27, title, id, marks, pins, 'puzzle'));

document.getElementById('canvas').insertAdjacentHTML('afterbegin', boxHtml.join('') + leafHtml.join('') + links);
```
